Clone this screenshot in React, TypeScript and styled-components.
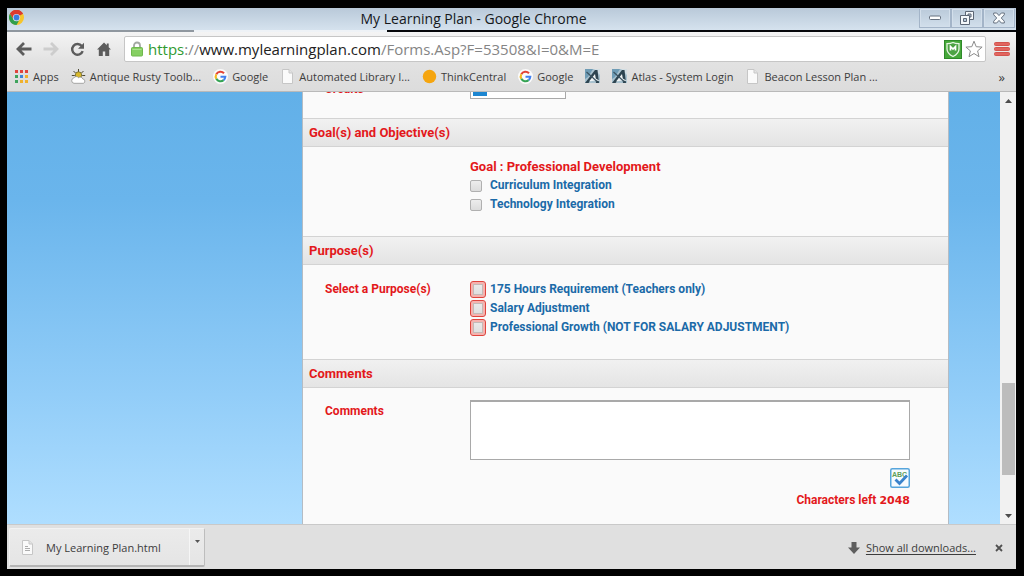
import React, { useState } from "react";
import styled, { createGlobalStyle, css } from "styled-components";

const GlobalStyle = createGlobalStyle`
  *, *::before, *::after { box-sizing: border-box; }
  body {
    margin: 0;
    background: #000;
    font-family: "Open Sans", "Noto Sans", sans-serif;
    color: #3c3c3c;
  }
  button { font: inherit; color: inherit; padding: 0; border: 0; background: none; }
  svg { display: block; flex: none; }
`;

const Desktop = styled.div`
  display: flex;
  height: 100vh;
  padding: 8px 8px 7px 7px;
  background: #000;
`;

const BrowserWindow = styled.div`
  display: flex;
  flex: 1;
  flex-direction: column;
  min-width: 0;
  background: #e2e2e2;
`;

const TitleBar = styled.header`
  display: flex;
  flex: none;
  align-items: stretch;
  height: 22px;
  background: linear-gradient(#b9c9d9, #d5e2ee);
`;

const TitleSide = styled.div<{ $end?: boolean }>`
  display: flex;
  flex: 1;
  padding: ${(p) => (p.$end ? "1px" : "2px")};
  justify-content: ${(p) => (p.$end ? "flex-end" : "flex-start")};
`;

const Title = styled.h1`
  margin: 0 78px 0 0;
  font-size: 14px;
  line-height: 22px;
  font-weight: 400;
  color: #15181c;
  white-space: nowrap;
`;

const CaptionButton = styled.button`
  display: flex;
  align-items: center;
  justify-content: center;
  width: 32px;
  height: 19px;
  border: 1px solid #a3b4c8;
  border-top: 0;
  box-shadow: inset 0 0 0 1px #d3dfeb;
`;

const TabStrip = styled.div`
  display: flex;
  flex: none;
  height: 2px;
  background: #eef2f6;
`;

const TabEdge = styled.div`
  width: 187px;
  background: #8f979f;
`;

const TabRest = styled.div`
  flex: 1;
  margin-left: 193px;
  background: #05070a;
`;

const Chrome = styled.div`
  flex: none;
  padding: 2px 0;
  border-bottom: 1px solid #b9b9b9;
  background: linear-gradient(#f4f4f4, #e2e2e2 50%, #dcdcdc);
`;

const Toolbar = styled.nav`
  display: flex;
  align-items: center;
  height: 30px;
  padding: 0 6px 0 9px;
`;

const ToolButton = styled.button`
  display: flex;
  align-items: center;
  width: 27px;
  height: 26px;
`;

const Omnibox = styled.div`
  display: flex;
  flex: 1;
  align-items: center;
  min-width: 0;
  height: 26px;
  padding: 0 2px 0 6px;
  border: 1px solid #c6c6c6;
  border-radius: 2px;
  background: #fff;
`;

const Address = styled.div`
  flex: 1;
  min-width: 0;
  margin-left: 5px;
  overflow: hidden;
  outline: 0;
  font-size: 15px;
  line-height: 24px;
  white-space: nowrap;
  color: #858585;
`;

const Scheme = styled.span`
  color: #2f9a2f;
`;

const Host = styled.span`
  color: #222;
`;

const BoxButton = styled.button`
  display: flex;
  margin-left: 3px;
`;

const MenuButton = styled.button`
  display: flex;
  margin-left: 8px;
`;

const BookmarksBar = styled.nav`
  display: flex;
  align-items: center;
  gap: 12px;
  height: 25px;
  padding: 0 11px 0 7px;
`;

const Bookmark = styled.a`
  display: flex;
  align-items: center;
  gap: 4px;
  font-size: 11px;
  line-height: 16px;
  color: #3d3d3d;
  text-decoration: none;
  white-space: nowrap;
`;

const Overflow = styled.button`
  margin-left: auto;
  font-size: 13px;
  line-height: 16px;
`;

const Viewport = styled.div`
  display: flex;
  flex: 1;
  min-height: 0;
`;

const Page = styled.main`
  display: flex;
  flex: 1;
  flex-direction: column;
  justify-content: flex-end;
  min-width: 0;
  overflow: hidden;
  padding: 0 51px 0 295px;
  background: linear-gradient(#62b0e8, #6ab5ec 25%, #92cdf8 70%, #afdeff);
`;

const Form = styled.form`
  border: 1px solid #b4bcc4;
  border-width: 0 1px;
  background: #fafafa;
  font-family: Roboto, "Liberation Sans", sans-serif;
  font-size: 12px;
  font-weight: 700;
  line-height: 19px;
  color: #e3181b;
`;

const SectionHeading = styled.h2`
  margin: 0;
  padding: 0 6px;
  border: 1px solid #d3d3d3;
  border-width: 1px 0;
  background: linear-gradient(#f1f1f1, #e4e4e4);
  font-size: 13px;
  line-height: 27px;
`;

const Row = styled.div<{ $pad: string }>`
  display: grid;
  grid-template-columns: 145px minmax(0, 1fr);
  padding: ${(p) => p.$pad};
`;

const FieldLabel = styled.label`
  display: block;
  padding-top: 2px;
`;

const Options = styled.fieldset`
  min-width: 0;
  margin: 0;
  padding: 0;
  border: 0;
`;

const GoalTitle = styled.legend`
  padding: 0;
  font-size: 13px;
  line-height: 19px;
`;

const Option = styled.label`
  display: grid;
  grid-template-columns: 20px 1fr;
  align-items: center;
  color: #1b6aa8;
`;

const CheckBox = styled.input<{ $required?: boolean }>`
  appearance: none;
  width: 12px;
  height: 12px;
  margin: 0;
  border: 1px solid #b0b0b0;
  border-radius: 2px;
  background: linear-gradient(#ededed, #dcdcdc);
  &:checked { background: #4a90d9; }
  ${(p) =>
    p.$required &&
    css`
      width: 16px;
      height: 17px;
      border: 1px solid #e0433c;
      border-radius: 3px;
      box-shadow: inset 0 0 0 2px #f5b3af, inset 0 0 0 3px #c4bab7;
    `}
`;

const CreditsInput = styled.input`
  width: 96px;
  height: 21px;
  border: 1px solid #a9a9a9;
  background: linear-gradient(#1c86d1, #1c86d1) 2px 1px / 14px 16px no-repeat #fff;
`;

const CommentArea = styled.div`
  display: flex;
  flex-direction: column;
  align-items: flex-end;
`;

const CommentBox = styled.textarea`
  display: block;
  width: 100%;
  height: 60px;
  resize: none;
  border: 1px solid #a9a9a9;
  border-top-width: 2px;
  background: #fff;
`;

const SpellButton = styled.button`
  display: flex;
  margin: 8px 0 4px;
`;

const Counter = styled.div`
  line-height: 16px;
`;

const Count = styled.strong`
  font-family: "DejaVu Sans", sans-serif;
  font-size: 11px;
`;

const ScrollTrack = styled.div`
  display: flex;
  flex-direction: column;
  align-items: center;
  width: 16px;
  padding: 7px 1px 6px;
  background: #f1f1f1;
`;

const ScrollSpace = styled.div<{ $grow: number }>`
  flex: ${(p) => p.$grow};
`;

const ScrollThumb = styled.div`
  flex: 92;
  width: 13px;
  background: #bcbcbc;
`;

const DownloadShelf = styled.footer`
  display: flex;
  flex: none;
  align-items: center;
  height: 45px;
  padding: 1px 13px 0 2px;
  border-top: 1px solid #c9c9c9;
  background: #e0e0e0;
  font-size: 11px;
`;

const DownloadItem = styled.div`
  display: flex;
  width: 196px;
  height: 39px;
  border: 1px solid #f2f2f2;
  border-right-color: #bdbdbd;
  border-bottom: 2px solid #b5b5b5;
  border-radius: 2px;
  background: linear-gradient(#ebebeb, #e5e5e5);
`;

const FileButton = styled.button`
  display: flex;
  flex: 1;
  align-items: center;
  gap: 11px;
  padding-left: 10px;
`;

const ItemMenu = styled.button`
  display: flex;
  justify-content: center;
  width: 15px;
  padding-top: 11px;
  border-left: 1px solid #f6f6f6;
`;

const AllDownloads = styled.a`
  display: flex;
  align-items: center;
  gap: 6px;
  margin-left: auto;
  color: #3c3c3c;
  line-height: 16px;
  text-underline-offset: 2px;
`;

const CloseShelf = styled.button`
  display: flex;
  margin-left: 19px;
`;

const ChromeLogo = () => (
  <svg width="15" height="15" viewBox="0 0 24 24">
    <circle cx="12" cy="12" r="12" fill="#f6c52c" />
    <path d="M12 12 1.6 6A12 12 0 0 1 22.4 6Z" fill="#db3b30" />
    <path d="M12 6H22.4A12 12 0 0 0 1.6 6L7 15Z" fill="#db3b30" />
    <path d="M1.6 6A12 12 0 0 0 12 24L17 15 7 15Z" fill="#2f9e4c" />
    <circle cx="12" cy="12" r="5.8" fill="#e8eef0" />
    <circle cx="12" cy="12" r="4.7" fill="#3a7de0" />
  </svg>
);

const AppsIcon = () => {
  const colors = ["#e0443c", "#e0443c", "#e0443c", "#3fa35c", "#3f86d8", "#f0b12c", "#3fa35c", "#f0b12c", "#f0b12c"];
  return (
    <svg width="15" height="15" viewBox="0 0 15 15">
      {colors.map((c, i) => (
        <rect key={i} x={1 + (i % 3) * 5} y={1 + Math.floor(i / 3) * 5} width="3" height="3" fill={c} />
      ))}
    </svg>
  );
};

const WeatherIcon = () => (
  <svg width="15" height="15" viewBox="0 0 15 15">
    <path d="M7.5 0v3M2.5 2l2 2M12.5 2l-2 2M0.8 6.5h3M14.2 6.5h-3" stroke="#4d4a35" strokeWidth="1" />
    <circle cx="7.5" cy="6" r="3.2" fill="#d9b92c" stroke="#6b6430" strokeWidth=".8" />
    <path d="M3 14.300a2.700 2.700 0 0 1-.2-5.300 2.800 2.800 0 0 1 4.700-.3 2.700 2.700 0 0 1 4.300 1.300A2.200 2.200 0 0 1 12.300 14.300Z" fill="#fff" stroke="#8a8a86" strokeWidth=".7" />
  </svg>
);

const GoogleIcon = () => (
  <svg width="15" height="15" viewBox="0 0 30 30">
    <circle cx="15" cy="15" r="15" fill="#fbfbfb" />
    <g fill="none" strokeWidth="4.2">
      <path d="M22 8.4A9.6 9.6 0 0 0 6.6 10.4" stroke="#e24335" />
      <path d="M6.6 10.4a9.6 9.6 0 0 0 0 9.2" stroke="#f5b922" />
      <path d="M6.6 19.6a9.6 9.6 0 0 0 14.6 2.7" stroke="#34a353" />
      <path d="M21.2 22.3A9.6 9.6 0 0 0 24.6 15.6H15" stroke="#4280ef" />
    </g>
  </svg>
);

const PageIcon = ({ lines }: { lines?: boolean }) => (
  <svg width="15" height="15" viewBox="0 0 15 15">
    <path d="M2.500.5h6.500l3.500 3.500v10.500h-10z" fill="#fafafa" stroke="#c6c6c6" />
    <path d="M9 .5V4h3.500" fill="#e4e4e4" stroke="#c6c6c6" />
    {lines && <path d="M5 6.500h3M5 8.500h5M5 10.500h5" stroke="#adadad" />}
  </svg>
);

const DotIcon = () => (
  <svg width="15" height="15" viewBox="0 0 15 15">
    <circle cx="7.5" cy="7.5" r="6.700" fill="#f5a50f" />
  </svg>
);

const AtlasIcon = () => (
  <svg width="15" height="15" viewBox="0 0 15 15">
    <rect width="15" height="14" fill="#a9c2cf" />
    <path d="M0 0h8L3 8 0 10z" fill="#6f9cb5" />
    <path d="M9 0h6v6z" fill="#d3dee3" />
    <path d="M0 14 10 1h2.500L14 14h-3l-.5-4H7l-3.500 4z" fill="#2d4450" />
    <path d="M4 12.500 10 5l.8 4.500L15 12l-5-.5z" fill="#f0f4f5" />
    <path d="M1.500 3 12 12.500" stroke="#3b5361" strokeWidth="1.200" />
  </svg>
);

const bookmarks: { label: string; name?: string; icon: React.ReactNode }[] = [
  { label: "Apps", icon: <AppsIcon /> },
  { label: "Antique Rusty Toolb...", icon: <WeatherIcon /> },
  { label: "Google", icon: <GoogleIcon /> },
  { label: "Automated Library I...", icon: <PageIcon /> },
  { label: "ThinkCentral", icon: <DotIcon /> },
  { label: "Google", icon: <GoogleIcon /> },
  { label: "", name: "Atlas", icon: <AtlasIcon /> },
  { label: "Atlas - System Login", icon: <AtlasIcon /> },
  { label: "Beacon Lesson Plan ...", icon: <PageIcon /> },
];

const goals = ["Curriculum Integration", "Technology Integration"];
const purposes = [
  "175 Hours Requirement (Teachers only)",
  "Salary Adjustment",
  "Professional Growth (NOT FOR SALARY ADJUSTMENT)",
];

const COMMENT_LIMIT = 2048;

export default function App() {
  const [comments, setComments] = useState("");

  return (
    <Desktop>
      <GlobalStyle />
      <BrowserWindow>
        <TitleBar>
          <TitleSide>
            <ChromeLogo />
          </TitleSide>
          <Title>My Learning Plan - Google Chrome</Title>
          <TitleSide $end>
            <CaptionButton aria-label="Minimize">
              <svg width="12" height="6" viewBox="0 0 12 6">
                <rect x=".5" y="1" width="11" height="3.500" rx="1" fill="#fff" stroke="#65707f" />
              </svg>
            </CaptionButton>
            <CaptionButton aria-label="Restore">
              <svg width="14" height="14" viewBox="0 0 14 14" fill="#f4f7fa" stroke="#5c6675">
                <path d="M5.500.5h8v8h-8z" />
                <path d="M8 3h3v3H8z" fill="#b9c9d9" />
                <path d="M.5 4.500h9v9h-9z" />
                <path d="M3.500 7.500h3v3h-3z" fill="#b9c9d9" />
              </svg>
            </CaptionButton>
            <CaptionButton aria-label="Close">
              <svg width="12" height="12" viewBox="0 0 12 12">
                <path d="M.7 1h3L6 3.600 8.300 1h3v1.800L8.300 6l3 3.200V11h-3L6 8.400 3.700 11h-3V9.200l3-3.200-3-3.200z" fill="#fafcfd" stroke="#65707f" />
              </svg>
            </CaptionButton>
          </TitleSide>
        </TitleBar>
        <TabStrip>
          <TabEdge />
          <TabRest />
        </TabStrip>

        <Chrome>
          <Toolbar>
            <ToolButton aria-label="Back">
              <svg width="16" height="14" viewBox="0 0 16 14" fill="none" stroke="#5c5c5c" strokeWidth="2.800">
                <path d="M2 7h13.500M8 1 2 7l6 6" />
              </svg>
            </ToolButton>
            <ToolButton aria-label="Forward">
              <svg width="16" height="14" viewBox="0 0 16 14" fill="none" stroke="#cdcdcd" strokeWidth="2.800">
                <path d="M14 7H.5M8 1l6 6-6 6" />
              </svg>
            </ToolButton>
            <ToolButton aria-label="Reload">
              <svg width="15" height="15" viewBox="0 0 15 15">
                <path d="M11.800 4A5.400 5.400 0 1 0 12.700 9.200" fill="none" stroke="#5c5c5c" strokeWidth="2.400" />
                <path d="M14 .8v6H8z" fill="#5c5c5c" />
              </svg>
            </ToolButton>
            <ToolButton aria-label="Home">
              <svg width="14" height="14" viewBox="0 0 14 14" fill="#5c5c5c">
                <path d="M7 .5 0 7.500h1.800V14h4V9.500h2.400V14h4V7.500H14L11.700 5.200V1.500H9.800v1.800z" />
              </svg>
            </ToolButton>
            <Omnibox>
              <svg width="12" height="16" viewBox="0 0 12 16">
                <path d="M3 7V4.500a3 3 0 0 1 6 0V7" fill="none" stroke="#a4a9a4" strokeWidth="1.800" />
                <rect x=".5" y="6.500" width="11" height="8.500" rx="1" fill="#85cf62" stroke="#6fb84e" />
                <path d="M1.500 8.500h9" stroke="#abe08f" />
              </svg>
              <Address role="textbox" aria-label="Address">
                <Scheme>https</Scheme>://<Host>www.mylearningplan.com</Host>/Forms.Asp?F=53508&amp;I=0&amp;M=E
              </Address>
              <BoxButton aria-label="Site safety">
                <svg width="18" height="19" viewBox="0 0 18 19">
                  <rect x=".5" y=".5" width="17" height="18" fill="#46a83a" stroke="#2f8a2a" />
                  <path d="M9 2.500c2 1 4 1.200 6 1.200V9c0 4-3 6-6 7.500C6 15 3 13 3 9V3.700C5 3.700 7 3.500 9 2.500z" fill="#4da344" stroke="#e8f5e4" strokeWidth="1.300" />
                  <path d="M6.500 10.500V6.500L9 9l2.500-2.500v4" fill="none" stroke="#fff" strokeWidth="1.700" />
                </svg>
              </BoxButton>
              <BoxButton aria-label="Bookmark this page">
                <svg width="18" height="18" viewBox="0 0 18 18">
                  <path d="m9 1.200 2.200 5.500 5.900.4-4.500 3.800 1.400 5.800L9 13.500l-5 3.200 1.400-5.800L.9 7.100l5.900-.4z" fill="#fff" stroke="#8c8c8c" />
                </svg>
              </BoxButton>
            </Omnibox>
            <MenuButton aria-label="Menu">
              <svg width="16" height="15" viewBox="0 0 16 15" fill="#e2655f" stroke="#d2544e">
                <rect x=".5" y=".5" width="15" height="3" rx="1" />
                <rect x=".5" y="5.500" width="15" height="3" rx="1" />
                <rect x=".5" y="10.500" width="15" height="3" rx="1" />
              </svg>
            </MenuButton>
          </Toolbar>
          <BookmarksBar>
            {bookmarks.map((b, i) => (
              <Bookmark key={i} href="#" aria-label={b.name}>
                {b.icon}
                {b.label}
              </Bookmark>
            ))}
            <Overflow aria-label="More bookmarks">»</Overflow>
          </BookmarksBar>
        </Chrome>

        <Viewport>
          <Page>
            <Form>
              <Row $pad="8px 38px 19px 22px">
                <FieldLabel htmlFor="credits">Credits</FieldLabel>
                <CreditsInput id="credits" />
              </Row>

              <SectionHeading>Goal(s) and Objective(s)</SectionHeading>
              <Row $pad="10px 38px 22px 22px">
                <span />
                <Options>
                  <GoalTitle>Goal : Professional Development</GoalTitle>
                  {goals.map((g) => (
                    <Option key={g}>
                      <CheckBox type="checkbox" />
                      {g}
                    </Option>
                  ))}
                </Options>
              </Row>

              <SectionHeading>Purpose(s)</SectionHeading>
              <Row $pad="15px 38px 22px 22px">
                <span id="purpose-label">Select a Purpose(s)</span>
                <Options aria-labelledby="purpose-label">
                  {purposes.map((p) => (
                    <Option key={p}>
                      <CheckBox type="checkbox" $required />
                      {p}
                    </Option>
                  ))}
                </Options>
              </Row>

              <SectionHeading>Comments</SectionHeading>
              <Row $pad="12px 38px 15px 22px">
                <FieldLabel htmlFor="comments">Comments</FieldLabel>
                <CommentArea>
                  <CommentBox
                    id="comments"
                    maxLength={COMMENT_LIMIT}
                    value={comments}
                    onChange={(e) => setComments(e.target.value)}
                  />
                  <SpellButton type="button" aria-label="Check spelling">
                    <svg width="20" height="20" viewBox="0 0 20 20">
                      <rect x=".75" y=".75" width="18.500" height="18.500" rx="1.500" fill="#f7fbfe" stroke="#56a5dc" strokeWidth="1.500" />
                      <text x="2" y="9" fontFamily="Liberation Sans" fontSize="7" fontWeight="700" fill="#5f9e58">ABC</text>
                      <path d="m5.500 11.500 4 4L17 7.500" fill="none" stroke="#3a83cc" strokeWidth="2.800" />
                    </svg>
                  </SpellButton>
                  <Counter>
                    Characters left <Count>{COMMENT_LIMIT - comments.length}</Count>
                  </Counter>
                </CommentArea>
              </Row>
            </Form>
          </Page>
          <ScrollTrack>
            <svg width="7" height="4" viewBox="0 0 7 4"><path d="M0 4 3.500 0 7 4z" fill="#4c4c4c" /></svg>
            <ScrollSpace $grow={280} />
            <ScrollThumb />
            <ScrollSpace $grow={39} />
            <svg width="7" height="4" viewBox="0 0 7 4"><path d="M0 0h7L3.500 4z" fill="#4c4c4c" /></svg>
          </ScrollTrack>
        </Viewport>

        <DownloadShelf>
          <DownloadItem>
            <FileButton>
              <PageIcon lines />
              My Learning Plan.html
            </FileButton>
            <ItemMenu aria-label="Download options">
              <svg width="5" height="3" viewBox="0 0 5 3"><path d="M0 0h5L2.500 3z" fill="#555" /></svg>
            </ItemMenu>
          </DownloadItem>
          <AllDownloads href="#">
            <svg width="12" height="12" viewBox="0 0 12 12" fill="#5e5e5e"><path d="M3.500 0h5v5.500H12L6 12 0 5.500h3.500z" /></svg>
            Show all downloads...
          </AllDownloads>
          <CloseShelf aria-label="Close downloads bar">
            <svg width="8" height="8" viewBox="0 0 8 8" stroke="#505050" strokeWidth="1.800"><path d="m1 1 6 6M7 1 1 7" /></svg>
          </CloseShelf>
        </DownloadShelf>
      </BrowserWindow>
    </Desktop>
  );
}
